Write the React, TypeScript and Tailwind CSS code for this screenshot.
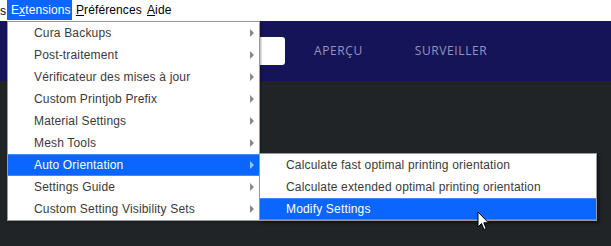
import React from "react";

const mainItems = [
  "Cura Backups",
  "Post-traitement",
  "Vérificateur des mises à jour",
  "Custom Printjob Prefix",
  "Material Settings",
  "Mesh Tools",
  "Auto Orientation",
  "Settings Guide",
  "Custom Setting Visibility Sets",
];

const subItems = [
  "Calculate fast optimal printing orientation",
  "Calculate extended optimal printing orientation",
  "Modify Settings",
];

const Arrow = ({ active }: { active: boolean }) => (
  <span
    className={
      "w-0 h-0 border-y-[4px] border-y-transparent border-l-[4px] " +
      (active ? "border-l-[#9cc0ff]" : "border-l-[#8a8a8a]")
    }
  />
);

const App = () => {
  return (
    <div
      className="relative w-[611px] h-[246px] overflow-hidden bg-[#212427] text-[12px]"
      style={{ fontFamily: '"Liberation Sans", Arial, sans-serif' }}
    >
      {/* menubar */}
      <div className="h-[21px] bg-white flex items-stretch text-black tracking-[0.1px]">
        <div className="w-[7px] overflow-hidden flex items-center justify-end">
          <span className="pr-[1px]">s</span>
        </div>
        <div className="w-[65px] bg-[#0a66ff] text-white pl-[4px] flex items-center h-[20px]">
          <span>
            E<span className="underline">x</span>tensions
          </span>
        </div>
        <div className="w-[71px] pl-[4px] flex items-center h-[20px]">
          <span>
            <span className="underline">P</span>références
          </span>
        </div>
        <div className="pl-[4px] flex items-center h-[20px]">
          <span>
            <span className="underline">A</span>ide
          </span>
        </div>
      </div>

      {/* app header */}
      <div
        className="h-[60px] bg-[#161458] flex items-center text-[12px] text-[#9294b8]"
        style={{ fontFamily: '"Open Sans", sans-serif' }}
      >
        <div className="ml-[100px] w-[185px] h-[28px] bg-white rounded-[3px]" />
        <span className="ml-[29px] tracking-[0.6px]">APERÇU</span>
        <span className="ml-[52px] tracking-[0.6px]">SURVEILLER</span>
      </div>

      {/* main dropdown */}
      <div className="absolute left-[7px] top-[21px] w-[253px] bg-white border border-[#9a9a9a] shadow-[1px_1px_2px_rgba(0,0,0,0.35)] tracking-[0.17px]">
        {mainItems.map((item) => {
          const active = item === "Auto Orientation";
          return (
            <div
              key={item}
              className={
                "h-[22px] flex items-center justify-between pl-[26px] pr-[5px] " +
                (active
                  ? "bg-[#0a66ff] text-white border-y border-[#3f8bff]"
                  : "text-[#3a3a3a]")
              }
            >
              <span>{item}</span>
              <Arrow active={active} />
            </div>
          );
        })}
      </div>

      {/* submenu */}
      <div className="absolute left-[259px] top-[153px] w-[338px] bg-white border border-[#9a9a9a] shadow-[2px_2px_3px_rgba(0,0,0,0.5)] tracking-[0.17px]">
        {subItems.map((item) => {
          const active = item === "Modify Settings";
          return (
            <div
              key={item}
              className={
                "h-[22px] flex items-center pl-[26px] " +
                (active
                  ? "bg-[#0a66ff] text-white border-y border-[#3f8bff]"
                  : "text-[#3a3a3a]")
              }
            >
              {item}
            </div>
          );
        })}
      </div>

      {/* mouse cursor */}
      <svg
        className="absolute left-[477px] top-[211px]"
        width="13"
        height="20"
        viewBox="0 0 13 20"
      >
        <path
          d="M1 1 L1 16 L4.5 12.5 L7 18.5 L9.2 17.6 L6.8 11.8 L11.5 11.8 Z"
          fill="white"
          stroke="black"
          strokeWidth="1"
          strokeLinejoin="round"
        />
      </svg>
    </div>
  );
};

export default App;
